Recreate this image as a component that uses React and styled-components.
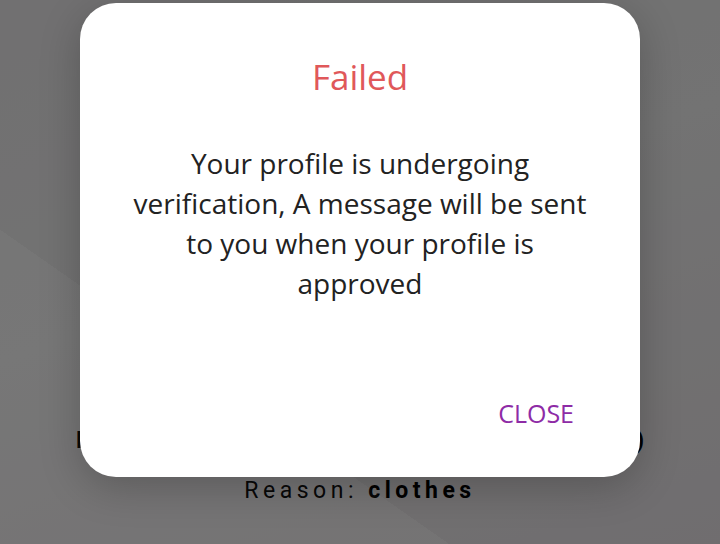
import React from "react";
import styled, { createGlobalStyle } from "styled-components";

const GlobalStyle = createGlobalStyle`
  html, body {
    margin: 0;
    padding: 0;
    width: 720px;
    height: 544px;
    overflow: hidden;
  }
  * { box-sizing: border-box; }
`;

const Screen = styled.div`
  position: relative;
  width: 720px;
  height: 544px;
  overflow: hidden;
  background: linear-gradient(160deg, #f0eef0 0%, #f4f4f4 45%, #eee8ec 100%);
`;

const Backdrop = styled.div`
  display: flex;
  flex-direction: column;
  align-items: center;
  font-family: Roboto, "Liberation Sans", sans-serif;
  color: #000;
`;

const InfoRow = styled.div`
  width: 100%;
  margin-top: 426px;
  display: flex;
  justify-content: space-between;
  padding: 0 72px 0 76px;
  font-size: 23px;
  letter-spacing: 4px;
  line-height: 30px;
  font-weight: 700;
`;

const Reason = styled.div`
  margin-top: 20px;
  font-size: 23px;
  letter-spacing: 4.5px;
  line-height: 30px;
  b { font-weight: 700; }
`;

const Scrim = styled.div`
  position: absolute;
  inset: 0;
  background:
    linear-gradient(35deg, rgba(255,255,255,0.03) 0%, rgba(255,255,255,0.03) 30%, rgba(0,0,0,0) 30%, rgba(0,0,0,0) 100%),
    rgba(0, 0, 0, 0.53);
  display: flex;
  justify-content: center;
  padding-top: 3px;
`;

const Dialog = styled.div`
  width: 560px;
  height: 474px;
  background: #fff;
  border-radius: 36px;
  box-shadow: 0 10px 40px rgba(0, 0, 0, 0.22);
  display: flex;
  flex-direction: column;
  align-items: center;
  font-family: "Open Sans", "Noto Sans", sans-serif;
`;

const Title = styled.h2`
  margin: 50px 0 0;
  font-size: 35px;
  font-weight: 400;
  line-height: 48px;
  color: #e0585a;
`;

const Message = styled.p`
  margin: 42px 0 0;
  width: 470px;
  text-align: center;
  font-size: 28px;
  line-height: 40px;
  color: #222;
`;

const Actions = styled.div`
  margin-top: auto;
  width: 100%;
  display: flex;
  justify-content: flex-end;
  padding: 0 66px 49px 0;
`;

const CloseButton = styled.button`
  border: none;
  background: none;
  padding: 0;
  font-family: "Open Sans", "Noto Sans", sans-serif;
  font-size: 25px;
  line-height: 30px;
  color: #8e2ba6;
  cursor: pointer;
`;

export default function App() {
  return (
    <Screen>
      <GlobalStyle />
      <Backdrop>
        <InfoRow>
          <span>E</span>
          <span>)</span>
        </InfoRow>
        <Reason>
          Reason: <b>clothes</b>
        </Reason>
      </Backdrop>
      <Scrim>
        <Dialog>
          <Title>Failed</Title>
          <Message>
            Your profile is undergoing verification, A message will be sent to
            you when your profile is approved
          </Message>
          <Actions>
            <CloseButton>CLOSE</CloseButton>
          </Actions>
        </Dialog>
      </Scrim>
    </Screen>
  );
}
